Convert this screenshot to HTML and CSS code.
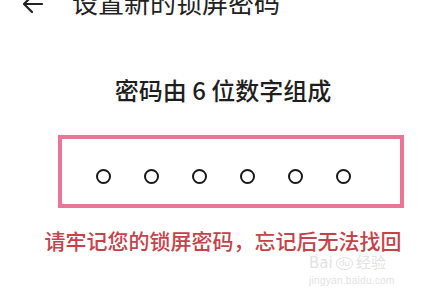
FILE: index.html
```html
<!DOCTYPE html>
<html lang="zh-CN">
<head>
    <meta charset="UTF-8">
    <meta name="viewport" content="width=device-width, initial-scale=1.0">
    <title>设置新的锁屏密码</title>
    <link rel="stylesheet" href="styles.css">
</head>
<body>

<div class="header">
    <svg class="back" width="22" height="22" viewBox="0 0 22 22">
        <path d="M21 11 H3 M11 3 L3 11 L11 19" fill="none" stroke="#222" stroke-width="2.2" stroke-linecap="round" stroke-linejoin="round"/>
    </svg>
    <div class="title">设置新的锁屏密码</div>
</div>

<div class="subtitle">密码由 6 位数字组成</div>

<div class="pin-box">
    <span class="dot"></span>
    <span class="dot"></span>
    <span class="dot"></span>
    <span class="dot"></span>
    <span class="dot"></span>
    <span class="dot"></span>
</div>

<div class="warning">请牢记您的锁屏密码，忘记后无法找回</div>

<div class="watermark">
    <div class="wm-logo"><span>Bai</span><span class="wm-paw">du</span><span>经验</span></div>
    <div class="wm-url">jingyan.baidu.com</div>
</div>

</body>
</html>
```

FILE: styles.css
```css
body {
    font-family: "Noto Sans CJK SC", "Noto Sans", sans-serif;
    background-color: #ffffff;
    color: #222222;
    margin: 0;
    padding: 0;
    width: 446px;
    height: 295px;
    overflow: hidden;
    position: relative;
}

.header {
    display: flex;
    align-items: center;
    height: 26px;
    margin-top: -11px;
}

.back {
    margin-left: 21px;
    margin-top: 4px;
}

.title {
    margin-left: 29px;
    font-size: 26px;
    line-height: 26px;
    color: #222;
}

.subtitle {
    margin-top: 63px;
    text-align: center;
    font-size: 24px;
    line-height: 24px;
    font-weight: 500;
    color: #1e1e1e;
}

.pin-box {
    box-sizing: border-box;
    width: 346px;
    height: 73px;
    margin-top: 33px;
    margin-left: 58px;
    border: 4px solid #eb7497;
    padding-top: 9px;
    padding-left: 34px;
    display: flex;
    align-items: center;
    gap: 33px;
}

.dot {
    box-sizing: border-box;
    width: 15px;
    height: 15px;
    border: 2px solid #1a1a1a;
    border-radius: 50%;
}

.warning {
    margin-top: 22px;
    text-align: center;
    font-size: 21px;
    line-height: 21px;
    font-weight: 500;
    color: #c4434b;
}

.watermark {
    position: absolute;
    left: 309px;
    top: 256px;
    color: #e2e2e2;
}

.wm-logo {
    font-family: "DejaVu Sans", sans-serif;
    font-size: 15px;
    line-height: 14px;
    display: flex;
    align-items: center;
    gap: 3px;
}

.wm-paw {
    font-size: 9px;
    line-height: 11px;
    border: 1px solid #e2e2e2;
    border-radius: 50%;
    padding: 0 2px;
}

.wm-url {
    margin-top: 5px;
    font-family: "Liberation Sans", sans-serif;
    font-size: 10px;
    line-height: 12px;
    letter-spacing: 0.3px;
}
```
